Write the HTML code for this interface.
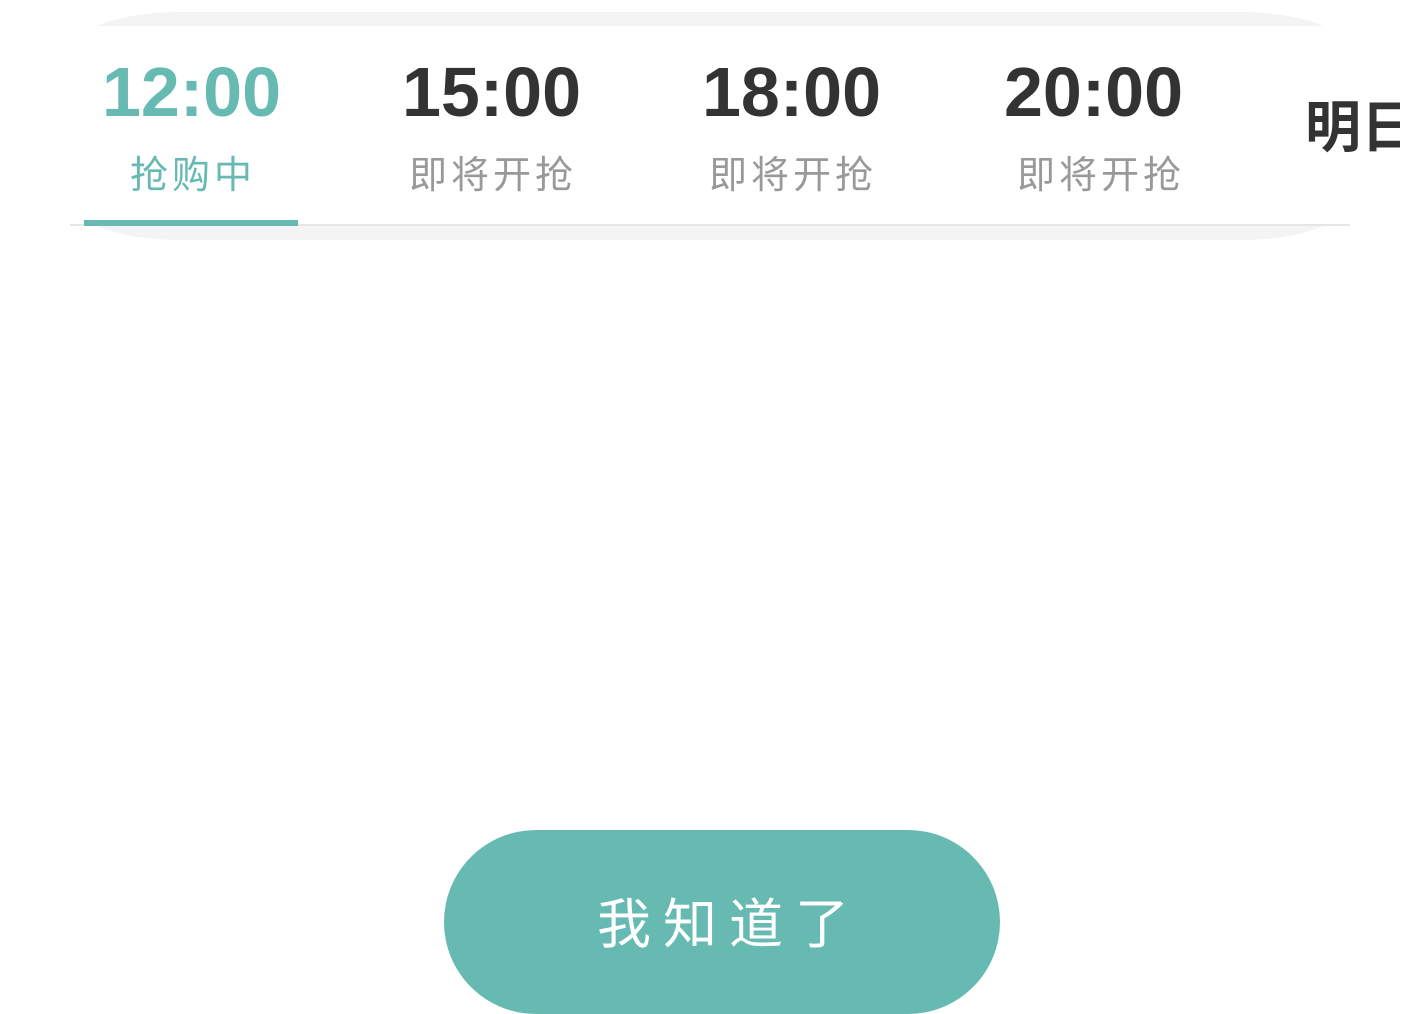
<!DOCTYPE html>
<html><head><meta charset="utf-8"><style>
html,body{margin:0;padding:0;width:1416px;height:1014px;overflow:hidden;background:#fff;position:relative;font-family:"Liberation Sans","Noto Sans CJK SC",sans-serif}
.bar{position:absolute;left:70px;top:12px;width:1280px;height:228px;background:#f4f4f4;border-radius:110px/40px}
.inner{position:absolute;left:60px;top:26px;width:1300px;height:198px;background:#fff}
.line{position:absolute;left:70px;top:224px;width:1280px;height:2px;background:#e6e6e6}
.ul{position:absolute;left:84px;top:220px;width:214px;height:6px;background:#66bab1}
.t{position:absolute;top:54px;font-size:70px;font-weight:bold;color:#333;letter-spacing:0px;line-height:76px}
.s{position:absolute;top:153px;font-size:38px;color:#999;letter-spacing:4px;line-height:46px}
.btn{position:absolute;left:444px;top:830px;width:556px;height:184px;border-radius:92px;background:#66bab1;color:#fff;font-size:54px;text-align:center;line-height:190px;letter-spacing:12px;padding-left:14px;box-sizing:border-box;font-family:"Liberation Sans","WenQuanYi Zen Hei",sans-serif}
</style></head><body>
<div class="bar"></div><div class="inner"></div><div class="line"></div><div class="ul"></div>
<div class="t" style="left:102px;color:#66bab1">12:00</div>
<div class="s" style="left:130px;color:#66bab1">抢购中</div>
<div class="t" style="left:402px">15:00</div>
<div class="s" style="left:409px">即将开抢</div>
<div class="t" style="left:702px">18:00</div>
<div class="s" style="left:709px">即将开抢</div>
<div class="t" style="left:1004px">20:00</div>
<div class="s" style="left:1017px">即将开抢</div>
<div style="position:absolute;left:1305px;top:96px;width:95px;overflow:hidden;white-space:nowrap;font-size:56px;font-weight:bold;color:#333;line-height:64px">明日</div>
<div class="btn">我知道了</div>
</body></html>
